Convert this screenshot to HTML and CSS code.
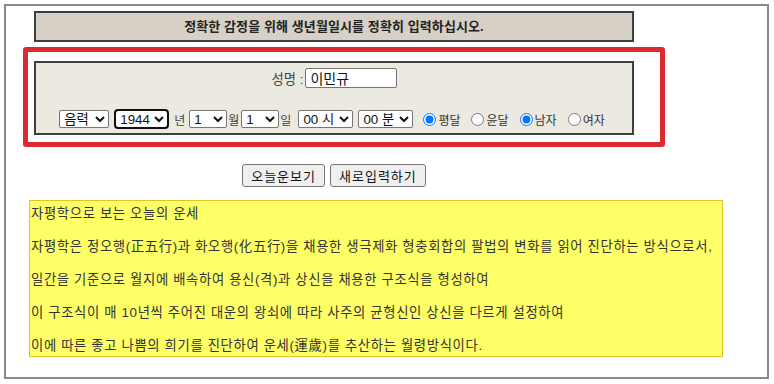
FILE: index.html
```html
<!DOCTYPE html>
<html lang="ko">
<head>
    <meta charset="UTF-8">
    <title>오늘의 운세</title>
    <link rel="stylesheet" href="styles.css">
</head>
<body>
    <div class="frame">
        <div class="col">
            <div class="notice">정확한 감정을 위해 생년월일시를 정확히 입력하십시오.</div>
            <div class="mark">
                <div class="form-box">
                    <div class="name-row">
                        <span class="label">성명 :</span>
                        <input type="text" class="name-input" value="이민규">
                    </div>
                    <div class="date-row">
                        <select class="sel sel-cal"><option>음력</option><option>양력</option></select>
                        <select class="sel sel-year focus"><option>1944</option></select>
                        <span class="unit unit-year">년</span>
                        <select class="sel sel-num"><option>1</option></select>
                        <span class="unit">월</span>
                        <select class="sel sel-num"><option>1</option></select>
                        <span class="unit">일</span>
                        <select class="sel sel-time"><option>00 시</option></select>
                        <select class="sel sel-time"><option>00 분</option></select>
                        <label class="radio first"><input type="radio" name="leap" checked>평달</label>
                        <label class="radio"><input type="radio" name="leap">윤달</label>
                        <label class="radio"><input type="radio" name="sex" checked>남자</label>
                        <label class="radio"><input type="radio" name="sex">여자</label>
                    </div>
                </div>
            </div>
            <div class="btn-row">
                <button type="button" class="btn">오늘운보기</button>
                <button type="button" class="btn">새로입력하기</button>
            </div>
        </div>
        <div class="result">
            <p>자평학으로 보는 오늘의 운세</p>
            <p>자평학은 정오행(正五行)과 화오행(化五行)을 채용한 생극제화 형충회합의 팔법의 변화를 읽어 진단하는 방식으로서,</p>
            <p>일간을 기준으로 월지에 배속하여 용신(격)과 상신을 채용한 구조식을 형성하여</p>
            <p>이 구조식이 매 10년씩 주어진 대운의 왕쇠에 따라 사주의 균형신인 상신을 다르게 설정하여</p>
            <p>이에 따른 좋고 나쁨의 희기를 진단하여 운세(運歲)를 추산하는 월령방식이다.</p>
        </div>
    </div>
</body>
</html>
```

FILE: styles.css
```css
*{
    margin: 0;
    padding: 0;
    box-sizing: border-box;
}
body{
    background-color: #fff;
    padding: 4px 0 0 4px;
    font-family: "Liberation Sans", "Noto Sans CJK KR", sans-serif;
    color: #222;
}
.frame{
    width: 765px;
    height: 375px;
    border: 2px solid #8a8a8a;
}
.col{
    width: 600px;
    margin-left: 28px;
    padding-top: 5px;
}
.notice{
    height: 31px;
    border: 2px solid #3e3e3e;
    background-color: #d6d0c6;
    text-align: center;
    font-size: 13px;
    font-weight: bold;
    letter-spacing: 0.1px;
    line-height: 27px;
    color: #222;
}
.mark{
    margin: 5px -31px 0 -11px;
    border: 5px solid #dc2a32;
    border-radius: 3px;
    padding: 9px 26px 7px 6px;
}
.form-box{
    height: 74px;
    border: 2px solid #3e3e3e;
    background-color: #ece9e1;
    padding-top: 5px;
    font-size: 12px;
}
.name-row{
    display: flex;
    justify-content: center;
    align-items: center;
    height: 20px;
    padding-left: 1px;
}
.label{
    color: #444;
    font-size: 13.33px;
    margin-right: 2px;
}
.name-input{
    width: 92px;
    height: 20px;
    border: 1px solid #767676;
    border-radius: 2px;
    padding: 0 4px;
    font-family: inherit;
    font-size: 14px;
    color: #111;
    background: #fff;
}
.date-row{
    display: flex;
    justify-content: center;
    align-items: center;
    margin-top: 22px;
    height: 18px;
    padding-right: 4px;
}
.sel{
    height: 18px;
    font-family: inherit;
    font-size: 13.33px;
    color: #111;
    background-color: #fff;
    border: 1px solid #767676;
    border-radius: 2px;
}
.sel-cal{
    width: 50px;
    margin-right: 6px;
}
.sel-year{
    width: 53px;
}
.sel-num{
    width: 38px;
}
.sel-time{
    width: 55px;
    margin-left: 5px;
}
.focus{
    outline: 2px solid #111;
    outline-offset: -1px;
    border-radius: 3px;
}
.unit{
    color: #444;
    margin: 0 2px 0 1px;
}
.unit-year{
    margin: 0 4px 0 6px;
}
.radio{
    display: flex;
    align-items: center;
    color: #333;
    font-size: 12px;
    margin-left: 11px;
}
.radio.first{
    margin-left: 10px;
}
.radio input{
    width: 13px;
    height: 13px;
    margin: 0 2px 0 0;
}
.btn-row{
    display: flex;
    justify-content: center;
    gap: 5px;
    margin-top: 17px;
}
.btn{
    height: 23px;
    padding: 0 8px;
    font-family: inherit;
    font-size: 13px;
    letter-spacing: 1px;
    color: #111;
    background-color: #efefef;
    border: 1px solid #767676;
    border-radius: 3px;
}
.result{
    width: 694px;
    height: 157px;
    margin: 13px 0 0 23px;
    border: 1px solid #e2c428;
    background-color: #ffff66;
    padding: 4px 1px 2px;
    font-size: 13.33px;
    letter-spacing: 0.65px;
    line-height: 17px;
    color: #333;
}
.result p{
    margin-bottom: 16px;
    white-space: nowrap;
}
.result p:last-child{
    margin-bottom: 0;
}
```
